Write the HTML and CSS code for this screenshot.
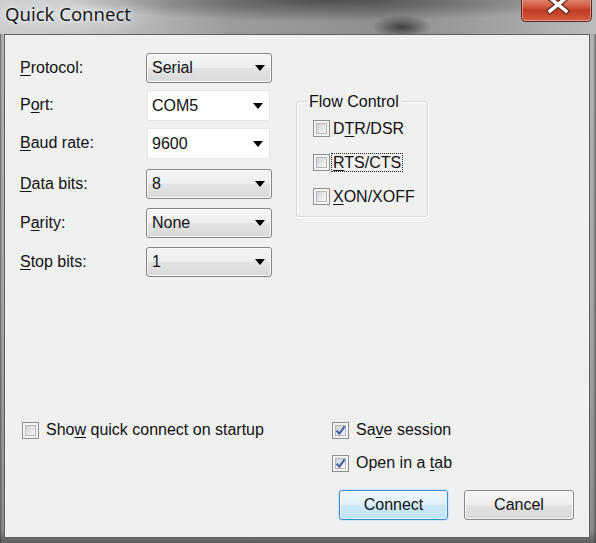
FILE: index.html
```html
<!DOCTYPE html>
<html>
<head>
<meta charset="utf-8">
<title>Quick Connect</title>
<link rel="stylesheet" href="styles.css">
</head>
<body>
<div class="window">
  <div class="titlebar">
    <span class="title">Quick Connect</span>
    <div class="close">
      <svg width="71" height="22" viewBox="0 0 71 22">
        <defs>
          <linearGradient id="cg" x1="0" y1="0" x2="0" y2="1">
            <stop offset="0" stop-color="#e9a595"/>
            <stop offset="0.45" stop-color="#d4614a"/>
            <stop offset="0.6" stop-color="#c03a22"/>
            <stop offset="1" stop-color="#d6603f"/>
          </linearGradient>
        </defs>
        <rect x="0.5" y="-7" width="70" height="28.5" rx="4" fill="url(#cg)" stroke="#5b2a22"/>
        <rect x="1.5" y="-6" width="68" height="26.5" rx="3" fill="none" stroke="rgba(255,220,210,0.45)"/>
        <path d="M29 -2 L45 11 M45 -2 L29 11" stroke="#6a2c22" stroke-width="6" stroke-linecap="square"/>
        <path d="M29 -2 L45 11 M45 -2 L29 11" stroke="#ffffff" stroke-width="3.4" stroke-linecap="square"/>
      </svg>
    </div>
  </div>
  <div class="client">
    <div class="top">
      <div class="form">
        <label class="lbl"><u>P</u>rotocol:</label>
        <div class="combo list"><span>Serial</span><i class="arrow"></i></div>

        <label class="lbl">P<u>o</u>rt:</label>
        <div class="combo edit"><span>COM5</span><i class="arrow"></i></div>

        <label class="lbl"><u>B</u>aud rate:</label>
        <div class="combo edit"><span>9600</span><i class="arrow"></i></div>

        <label class="lbl"><u>D</u>ata bits:</label>
        <div class="combo list"><span>8</span><i class="arrow"></i></div>

        <label class="lbl">P<u>a</u>rity:</label>
        <div class="combo list"><span>None</span><i class="arrow"></i></div>

        <label class="lbl"><u>S</u>top bits:</label>
        <div class="combo list"><span>1</span><i class="arrow"></i></div>
      </div>

      <fieldset class="group">
        <legend>Flow Control</legend>
        <div class="grow"><span class="cb"><span class="cb-in"></span></span><span class="cl">D<u>T</u>R/DSR</span></div>
        <div class="grow"><span class="cb"><span class="cb-in"></span></span><span class="cl focus"><u>R</u>TS/CTS</span></div>
        <div class="grow"><span class="cb"><span class="cb-in"></span></span><span class="cl"><u>X</u>ON/XOFF</span></div>
      </fieldset>
    </div>

    <div class="bottom">
      <div class="brow"><span class="cb"><span class="cb-in"></span></span><span>Sho<u>w</u> quick connect on startup</span></div>
      <div class="right">
        <div class="brow"><span class="cb"><span class="cb-in"><svg class="tick" width="11" height="11" viewBox="0 0 11 11"><path d="M1.6 5.6 L4.4 8.6 L9.6 1.4" fill="none" stroke="#4560a6" stroke-width="2.1"/></svg></span></span><span>Sa<u>v</u>e session</span></div>
        <div class="brow"><span class="cb"><span class="cb-in"><svg class="tick" width="11" height="11" viewBox="0 0 11 11"><path d="M1.6 5.6 L4.4 8.6 L9.6 1.4" fill="none" stroke="#4560a6" stroke-width="2.1"/></svg></span></span><span>Open in a <u>t</u>ab</span></div>
        <div class="buttons">
          <button class="btn default">Connect</button>
          <button class="btn cancel">Cancel</button>
        </div>
      </div>
    </div>
  </div>
</div>
</body>
</html>
```

FILE: styles.css
```css
* { box-sizing: border-box; }

html, body {
  margin: 0;
  padding: 0;
}

body {
  width: 596px;
  height: 543px;
  overflow: hidden;
  font-family: "Liberation Sans", Arial, sans-serif;
  font-size: 16px;
  color: #111;
  background: #a3a5a7;
}

u { text-decoration: underline; text-underline-offset: 1.5px; }

.window {
  width: 596px;
  height: 543px;
  display: flex;
  flex-direction: column;
  background:
    linear-gradient(to right, rgba(50,50,50,.6) 0, rgba(50,50,50,0) 2px, rgba(50,50,50,0) 593px, rgba(50,50,50,.6) 596px),
    linear-gradient(to bottom, #b4b6b8 0, #a4a6a8 300px, #8a8c8e 530px, #5a5c5e 543px);
}

.titlebar {
  height: 34px;
  flex: none;
  display: flex;
  justify-content: space-between;
  align-items: flex-start;
  padding-left: 5px;
  background:
    radial-gradient(ellipse 30px 12px at 402px 27px, rgba(20,20,20,.65), rgba(20,20,20,0)),
    radial-gradient(ellipse 260px 22px at 330px 0, rgba(40,40,40,.65), rgba(40,40,40,0)),
    radial-gradient(ellipse 110px 26px at 60px 14px, rgba(255,255,255,.4), rgba(255,255,255,0)),
    linear-gradient(to right, #c6c8ca 0, #b9bbbd 120px, #9a9c9e 230px, #8d8f91 380px, #a0a2a4 500px, #b9bbbd 596px);
}

.title {
  font-family: "Noto Sans", "Liberation Sans", sans-serif;
  font-size: 18.5px;
  line-height: 26px;
  padding-top: 1px;
  color: #15171a;
  text-shadow: 0 0 6px rgba(255,255,255,.85), 0 0 2px rgba(255,255,255,.6);
}

.close {
  width: 71px;
  height: 22px;
  margin-right: 4px;
}
.close svg { display: block; }

.client {
  flex: 1;
  margin: 0 6px 5px 4px;
  border: 1px solid #5e6164;
  background: #f0f0f0;
  display: flex;
  flex-direction: column;
  padding: 18px 14px 17px 15px;
}

.top {
  display: flex;
  align-items: flex-start;
}

.form {
  display: grid;
  grid-template-columns: 126px 126px;
  grid-template-rows: 37px 38px 41px 39px 39px 31px;
  align-items: start;
}

.lbl {
  height: 30px;
  line-height: 30px;
  white-space: nowrap;
}

.combo {
  display: flex;
  align-items: center;
  justify-content: space-between;
  height: 30px;
  padding: 0 6px 0 5px;
  white-space: nowrap;
}

.combo.list {
  border: 1px solid #858687;
  border-radius: 3px;
  background: linear-gradient(#f5f5f5, #eeeeee 48%, #e3e3e3 52%, #d9d9d9);
  box-shadow: inset 0 0 0 1px rgba(255,255,255,.75);
}

.combo.edit {
  height: 31px;
  width: 123px;
  margin-left: 1px;
  padding-left: 4px;
  padding-right: 6px;
  background: #fff;
  border: 1px solid #e4e5e8;
}

.arrow {
  width: 0;
  height: 0;
  border-left: 5px solid transparent;
  border-right: 5px solid transparent;
  border-top: 6px solid #000;
}

.group {
  margin: 39px 0 0 24px;
  width: 132px;
  padding: 0 8px 3px 10px;
  border: 1px solid #d3d8dc;
  border-radius: 3px;
  box-shadow: inset 1px 1px 0 #fff, 1px 1px 0 #fff;
}

.group legend {
  padding: 0 2px;
  line-height: 19px;
}

.grow {
  display: flex;
  align-items: center;
  height: 34px;
  margin-left: 6px;
  gap: 1px;
  white-space: nowrap;
}

.cl {
  line-height: 16px;
  padding: 1px 1px 0;
  border: 1px solid transparent;
}
.cl.focus { border: 1px dotted #222; }

.cb {
  width: 17px;
  height: 17px;
  flex: none;
  border: 1px solid #8e8f8f;
  background: #f5f5f5;
  padding: 2px;
  display: flex;
}

.cb-in {
  flex: 1;
  display: flex;
  border: 1px solid #b3b6ba;
  background: linear-gradient(135deg, #cfd2d5, #f8f8f8);
}

.tick {
  display: block;
  margin: -1px;
  overflow: visible;
}

.bottom {
  margin-top: auto;
  display: grid;
  grid-template-columns: 310px 1fr;
  margin-left: 2px;
  align-items: start;
}

.brow {
  display: flex;
  align-items: center;
  gap: 7px;
  height: 33px;
  white-space: nowrap;
}

.buttons {
  display: flex;
  gap: 16px;
  margin: 10.5px 0 0 7px;
}

.btn {
  height: 30px;
  font-family: inherit;
  font-size: 16px;
  color: #111;
  border-radius: 3px;
  padding: 0;
  text-align: center;
}

.btn.default {
  width: 109px;
  border: 1px solid #3c8bc6;
  background: linear-gradient(#ecf7fd 0, #dff1fb 48%, #cde9f9 52%, #bee3f7 100%);
  box-shadow: inset 0 0 0 1px rgba(255,255,255,.6), 0 0 2px rgba(90,190,245,.7);
}

.btn.cancel {
  width: 110px;
  border: 1px solid #8a8a8a;
  background: linear-gradient(#f5f5f5, #eeeeee 48%, #e2e2e2 52%, #d8d8d8);
  box-shadow: inset 0 0 0 1px rgba(255,255,255,.75);
}
```
